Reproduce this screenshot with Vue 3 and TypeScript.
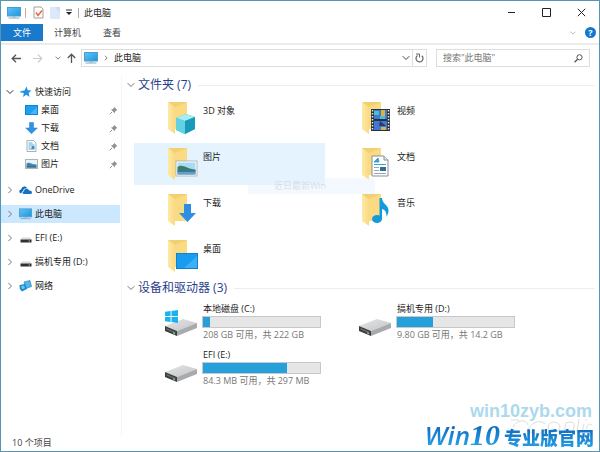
<script setup lang="ts">
import { ref } from 'vue'

interface NavItem { name: string; icon: string }
interface Drive { name: string; free: string; used: number; system?: boolean }

const quick: NavItem[] = [
  { name: '桌面', icon: 'desktop' },
  { name: '下载', icon: 'download' },
  { name: '文档', icon: 'document' },
  { name: '图片', icon: 'picture' },
]
const roots: NavItem[] = [
  { name: 'OneDrive', icon: 'cloud' },
  { name: '此电脑', icon: 'pc' },
  { name: 'EFI (E:)', icon: 'disk' },
  { name: '搞机专用 (D:)', icon: 'disk' },
  { name: '网络', icon: 'network' },
]
const folders: NavItem[] = [
  { name: '3D 对象', icon: 'cube' },
  { name: '视频', icon: 'video' },
  { name: '图片', icon: 'picture' },
  { name: '文档', icon: 'document' },
  { name: '下载', icon: 'download' },
  { name: '音乐', icon: 'music' },
  { name: '桌面', icon: 'desktop' },
]
const drives: Drive[] = [
  { name: '本地磁盘 (C:)', free: '208 GB 可用，共 222 GB', used: 6, system: true },
  { name: '搞机专用 (D:)', free: '9.80 GB 可用，共 14.2 GB', used: 31 },
  { name: 'EFI (E:)', free: '84.3 MB 可用，共 297 MB', used: 72 },
]
const current = ref('此电脑')
const hovered = ref(2)
const query = ref('')
</script>

<template>
  <div class="window">
    <svg class="defs" aria-hidden="true">
      <defs>
        <linearGradient id="gBlue" x1="0" y1="0" x2="1" y2="1">
          <stop offset="0" stop-color="#62c5f5" /><stop offset="1" stop-color="#1d93e0" />
        </linearGradient>
        <linearGradient id="gFolder" x1="0" y1="0" x2="1" y2="0">
          <stop offset="0" stop-color="#ffe9a6" /><stop offset="1" stop-color="#f9da84" />
        </linearGradient>
        <linearGradient id="gDisk" x1="0" y1="0" x2="1" y2="1">
          <stop offset="0" stop-color="#e6e6e8" /><stop offset="1" stop-color="#c3c4c7" />
        </linearGradient>
        <symbol id="pc" viewBox="0 0 14 12">
          <rect x="0.5" y="0.5" width="13" height="8.5" fill="url(#gBlue)" stroke="#4a9fd0" />
          <path d="M5 9.5h4v1H5z" fill="#9cb9ca" /><path d="M1.5 11h11" stroke="#86a9bd" />
        </symbol>
        <symbol id="n-desktop" viewBox="0 0 13 12">
          <rect x="0.5" y="1.5" width="12" height="9" fill="#1ba0f2" stroke="#1583cf" /><path d="M5 10L12 3v7z" fill="#47b6f8" />
        </symbol>
        <symbol id="n-download" viewBox="0 0 13 12">
          <path d="M4.5 0.5h4V6h3.8L6.5 11.8 0.7 6h3.8z" fill="#3293e0" stroke="#2379c4" stroke-width="0.5" />
        </symbol>
        <symbol id="n-document" viewBox="0 0 13 12">
          <path d="M2 .5h6.500L11 3v8.500H2z" fill="#fff" stroke="#8ca0ae" stroke-width="0.8" />
          <path d="M3.500 3h4M3.500 5h6M3.500 7h2M3.500 9h6" stroke="#55a7d2" /><path d="M6.500 6h3v3h-3z" fill="#3a8fc2" />
        </symbol>
        <symbol id="n-picture" viewBox="0 0 13 12">
          <rect x="0.5" y="1.500" width="12" height="9" fill="#e6f3fb" stroke="#a9b4bc" />
          <path d="M1.500 5.500c3-2 4 1 10 1v3h-10z" fill="#3c86ad" /><path d="M1.500 8.500h10v1h-10z" fill="#2c5a73" />
        </symbol>
        <symbol id="n-cloud" viewBox="0 0 13 12">
          <path d="M2.500 9.500C-.5 9-.2 5.600 2.300 5.500 2.600 2 7 1.300 8.200 4.300 5 4 4 6 4.200 7c-1.500.3-1.900 1.500-1.700 2.500z" fill="#0a66b8" />
          <path d="M5 10C2.900 9.500 3.100 7.300 5 7.200 5.200 4.200 9.300 4 10 6.500c3.500-.3 3.700 3.200 1.500 3.500z" fill="#1271c8" />
        </symbol>
        <symbol id="n-disk" viewBox="0 0 13 12">
          <path d="M3 5.500h8l1.500 2h-11z" fill="#d9dadd" /><rect x="1.500" y="7.500" width="11" height="3" fill="#2f3133" />
          <path d="M9.500 9h1.500" stroke="#85c78c" />
        </symbol>
        <symbol id="n-network" viewBox="0 0 13 12">
          <path d="M5 2l6-1.500 1.500 6L7 8.500z" fill="#4db8ec" stroke="#1a78b8" stroke-width=".6" />
          <path d="M.5 5L6 4l2 5-5 2.500L.8 9z" fill="#1f86cb" /><path d="M2 6l3-.6 1 2.800-3 1z" fill="#65c7f4" />
        </symbol>
        <symbol id="folder" viewBox="0 0 34 34">
          <path d="M1 1h19v27H8z" fill="#f2cf70" />
          <path d="M8 6l12-5v27H8z" fill="#fada83" />
          <path d="M1 1l7 5v27l-7-5z" fill="url(#gFolder)" />
        </symbol>
        <symbol id="f-cube" viewBox="0 0 34 34">
          <path d="M9 17l10-4 9 3v12l-10 5-9-4z" fill="#2fb5cf" /><path d="M9 17l10-4 9 3-10 4z" fill="#a7edf3" />
          <path d="M9 17l9 3v13l-9-4z" fill="#62d2e3" /><path d="M18 20l10-4v12l-10 5z" fill="#189bb9" />
        </symbol>
        <symbol id="f-picture" viewBox="0 0 34 34">
          <rect x="9" y="14" width="21" height="15" fill="#fff" stroke="#a5abb0" stroke-width=".8" /><path d="M10.500 15.500h18v12h-18z" fill="#a9dbf6" />
          <path d="M10.500 20c5-4 9 2 18 2.500v2h-18z" fill="#3a7f61" /><path d="M10.500 23.500h18v4h-18z" fill="#3479ad" /><path d="M10.500 26h18" stroke="#9bc5dc" />
        </symbol>
        <symbol id="f-video" viewBox="0 0 34 34">
          <rect x="10" y="8" width="19" height="22" fill="#27313c" /><path d="M13 9h13v9H13zM13 20h13v9H13z" fill="#4278d4" />
          <path d="M13 10h5v4h-5zM19 15h5v3h-5z" fill="#45c2cd" /><path d="M20 9h4v6h-4zM20 26h5v3h-5z" fill="#dbb43c" />
          <path d="M19 20l6 5h-7z" fill="#223d78" />
          <path d="M11.500 9v20M27.500 9v20" stroke="#e6e8ea" stroke-width="1.500" stroke-dasharray="1.500 1.500" />
        </symbol>
        <symbol id="f-document" viewBox="0 0 34 34">
          <path d="M11 9h12l4 4v16H11z" fill="#fff" stroke="#8b8f94" /><path d="M23 9v4h4" fill="#e5eaee" stroke="#8b8f94" />
          <path d="M13 15l4-4 1 4zM13 17.500h12" stroke="#39a2d8" fill="#39a2d8" />
          <path d="M13 20.500h5M13 23.500h5M13 26.500h12" stroke="#94a9b8" /><path d="M19 20h6v4h-6z" fill="#386c91" />
        </symbol>
        <symbol id="f-download" viewBox="0 0 34 34">
          <path d="M17 11h7v9h5l-8.500 9L12 20h5z" fill="#2e8fe0" />
        </symbol>
        <symbol id="f-music" viewBox="0 0 34 34">
          <ellipse cx="16" cy="26" rx="5" ry="4" fill="#129bdc" />
          <path d="M18.500 5h2.500c0 6 7 7 6.500 13-.2 3-1.500 4-2 6 0-5-1-7-4.500-8v10h-2.500z" fill="#129bdc" />
        </symbol>
        <symbol id="f-desktop" viewBox="0 0 34 34">
          <rect x="9.500" y="14.500" width="21" height="15" fill="#189cf0" stroke="#1181cd" /><path d="M17 29L30 17v12z" fill="#3bb0f7" />
        </symbol>
        <symbol id="drive" viewBox="0 0 34 32">
          <path d="M1 20L19 13l14 4-20 8z" fill="url(#gDisk)" /><path d="M13 25l20-8v5l-20 8z" fill="#a9aaae" />
          <path d="M1 20l12 5v5L1 25z" fill="#3a3c3e" /><path d="M2.500 22l9 4v1.500l-9-4z" fill="#6a6d6f" />
          <path d="M9 26l2 1v1.500l-2-1z" fill="#72c47f" />
        </symbol>
        <symbol id="winlogo" viewBox="0 0 14 14">
          <path d="M0 2l6-1v5.500H0zM7 1l7-1v6.500H7zM0 7.500h6V13l-6-1zM7 7.500h7V14l-7-1z" fill="#18b4ee" />
        </symbol>
        <symbol id="right" viewBox="0 0 8 8"><path d="M2.500 1l3 3-3 3" fill="none" stroke="currentColor" /></symbol>
        <symbol id="down" viewBox="0 0 8 8"><path d="M0.700 2.200L4 5.500l3.300-3.300" fill="none" stroke="currentColor" /></symbol>
      </defs>
    </svg>

    <header class="titlebar">
      <svg class="pc"><use href="#pc" /></svg>
      <i class="sep warm"></i>
      <button class="plain" aria-label="属性">
        <svg width="11" height="13" viewBox="0 0 11 13"><path d="M1 1h7l2 2v9H1z" fill="#fff" stroke="#a99b98" /><path d="M3 6.500l2 3 4-5" fill="none" stroke="#e0683c" stroke-width="1.500" /></svg>
      </button>
      <button class="plain" aria-label="新建文件夹">
        <svg width="10" height="12" viewBox="0 0 10 12"><path d="M0 0h10v12H0z" fill="#dce9fa" /><path d="M5 0h5v6z" fill="#ccddf5" /></svg>
      </button>
      <button class="plain" aria-label="自定义">
        <svg width="6" height="7" viewBox="0 0 6 7"><path d="M0 1h6" stroke="#333" /><path d="M0 3h6L3 6z" fill="#222" /></svg>
      </button>
      <i class="sep"></i>
      <h1>此电脑</h1>
      <div class="controls">
        <button class="plain" aria-label="最小化"><svg viewBox="0 0 9 9"><path d="M1 4.500h7" stroke="#222" /></svg></button>
        <button class="plain" aria-label="最大化"><svg viewBox="0 0 9 9"><path d="M.5.5h8v8h-8z" fill="none" stroke="#222" /></svg></button>
        <button class="plain" aria-label="关闭"><svg viewBox="0 0 9 9"><path d="M.8.8l7.400 7.400M8.200.8L.8 8.200" stroke="#222" /></svg></button>
      </div>
    </header>

    <nav class="ribbon">
      <button class="tab active">文件</button>
      <button class="tab">计算机</button>
      <button class="tab">查看</button>
      <div class="help">
        <button class="plain light" aria-label="展开功能区"><svg class="small"><use href="#down" /></svg></button>
        <button class="plain question" aria-label="帮助">?</button>
      </div>
    </nav>

    <div class="address">
      <button class="plain" aria-label="后退"><svg width="10" height="9" viewBox="0 0 10 9"><path d="M5 .8L1.200 4.500 5 8.200M1 4.500h9" fill="none" stroke="#555" stroke-width="1.300" /></svg></button>
      <button class="plain" aria-label="前进"><svg width="10" height="9" viewBox="0 0 10 9"><path d="M5 .8l3.800 3.700L5 8.200M9 4.500H0" fill="none" stroke="#ccc" stroke-width="1.200" /></svg></button>
      <button class="plain grey" aria-label="最近位置"><svg class="small"><use href="#down" /></svg></button>
      <button class="plain" aria-label="上移"><svg width="9" height="10" viewBox="0 0 9 10"><path d="M.8 5l3.700-3.800L8.200 5M4.500 1v9" fill="none" stroke="#555" stroke-width="1.300" /></svg></button>
      <div class="path">
        <svg class="pc"><use href="#pc" /></svg>
        <svg class="small"><use href="#right" /></svg>
        <span>此电脑</span>
        <button class="plain drop" aria-label="地址列表"><svg class="chev"><use href="#down" /></svg></button>
        <button class="plain refresh" aria-label="刷新"><svg width="9" height="10" viewBox="0 0 9 10"><path d="M2.500 2.500a3.500 3.500 0 1 0 4.300.2" fill="none" stroke="#666" stroke-width="1.200" /><path d="M1 1h3.500v3.500" fill="none" stroke="#666" /></svg></button>
      </div>
      <label class="search">
        <input v-model="query" type="text" placeholder="搜索&quot;此电脑&quot;" aria-label="搜索此电脑" />
        <svg width="9" height="9" viewBox="0 0 9 9"><circle cx="5.500" cy="3.300" r="2.600" fill="none" stroke="#555" /><path d="M3.600 5.200L.6 8.300" stroke="#555" stroke-width="1.300" /></svg>
      </label>
    </div>

    <div class="body">
      <aside class="tree">
        <div class="quick">
          <a href="#quick" class="row">
            <svg class="chev dark"><use href="#down" /></svg>
            <svg class="star" viewBox="0 0 12 12"><path d="M6.500.5l1.300 3.700 3.700.3-2.900 2.500.9 4-3.200-2.200L3 11l.9-4L0 6.200l.5-1 4-.8z" fill="#2490e2" /></svg>
            <span>快速访问</span>
          </a>
          <a v-for="q in quick" :key="q.name" href="#quick" class="row child">
            <svg class="nav"><use :href="'#n-' + q.icon" /></svg>
            <span>{{ q.name }}</span>
            <svg class="pin" viewBox="0 0 9 9"><path d="M5 .7l3.300 3.300-1 .5-1.500 1.500v1.500L2 3.500l1.500-.3L5 1.700z" fill="#8b9298" /><path d="M3 6L.8 8.200" stroke="#8b9298" /></svg>
          </a>
        </div>
        <a v-for="r in roots" :key="r.name" href="#root" class="row root" :class="{ selected: r.name === current }" @click.prevent="current = r.name">
          <svg class="chev"><use href="#right" /></svg>
          <svg v-if="r.icon === 'pc'" class="nav"><use href="#pc" /></svg>
          <svg v-else class="nav"><use :href="'#n-' + r.icon" /></svg>
          <span>{{ r.name }}</span>
        </a>
      </aside>

      <main>
        <section>
          <h2><svg class="chev"><use href="#down" /></svg>文件夹 (7)</h2>
          <div class="grid">
            <a v-for="(f, i) in folders" :key="f.name" href="#folder" class="tile" :class="{ hover: i === hovered }" @mouseenter="hovered = i">
              <svg class="big" viewBox="0 0 34 34"><use href="#folder" width="34" height="34" /><use :href="'#f-' + f.icon" width="34" height="34" /></svg>
              <span>{{ f.name }}</span>
            </a>
          </div>
        </section>
        <section class="devices">
          <h2><svg class="chev"><use href="#down" /></svg>设备和驱动器 (3)</h2>
          <div class="grid">
            <a v-for="d in drives" :key="d.name" href="#drive" class="tile drive">
              <svg class="disk" viewBox="0 0 34 32"><use href="#drive" width="34" height="32" /><use v-if="d.system" href="#winlogo" x="1" y="4" width="13" height="13" /></svg>
              <div class="info">
                <span>{{ d.name }}</span>
                <div class="bar"><div class="fill" :style="{ width: d.used + '%' }"></div></div>
                <span class="free">{{ d.free }}</span>
              </div>
            </a>
          </div>
        </section>
        <div class="ghost">近日最新Win</div>
      </main>
    </div>

    <footer>10 个项目</footer>

    <div class="brand">
      <div class="site">win10zyb.com</div>
      <svg class="faint" viewBox="0 0 84 20" aria-hidden="true">
        <path d="M1 3h8M3 10c4-8 14-8 15-2M17 15c3-10 13-13 18-8M19 14c5 5 12 4 16-1" />
        <ellipse cx="44" cy="10" rx="6" ry="5" /><path d="M54 15l2-9c5-2 9-1 8 3l-1 6M69 2l-2 13M72 15l2-8M75 3h2M82 8c-4-2-6 1-5 4" />
      </svg>
      <div class="name"><span class="win">Win</span><span class="ten">10</span><span class="cn">专业版官网</span></div>
    </div>
  </div>
</template>

<style>
body { margin: 0; }
</style>

<style scoped>
.window {
  position: relative;
  box-sizing: border-box;
  min-height: 100vh;
  display: flex;
  flex-direction: column;
  border: 1px solid #5596b4;
  background: #fff;
  color: #222;
  font: 9px/12px "Open Sans", "Noto Sans CJK SC", sans-serif;
}
.defs { position: absolute; width: 0; height: 0; }
svg { display: block; flex: none; }
.plain { display: flex; align-items: center; justify-content: center; padding: 0; border: 0; background: none; color: #555; }
.plain.light .small { color: #aaa; }
.plain.grey { color: #999; }
a { color: inherit; text-decoration: none; }
.pc { width: 14px; height: 12px; }
.chev { width: 8px; height: 8px; color: #777; }
.small { width: 6px; height: 6px; color: #555; }

.titlebar { display: flex; align-items: center; height: 23px; padding-left: 6px; gap: 6px; }
.sep { width: 1px; height: 10px; background: #aaa; }
.sep.warm { background: #d9a790; margin: 0 1px 0 -2px; }
h1 { margin: 0 0 0 -1px; font-size: 9px; font-weight: 400; }
.controls { display: flex; margin-left: auto; gap: 26px; padding-right: 13px; }
.controls svg { width: 9px; height: 9px; }

.ribbon { display: flex; height: 17px; padding-bottom: 2px; border-bottom: 2px solid #ececec; }
.tab { padding: 0 11px; border: 0; background: none; color: #444; font: inherit; }
.tab.active { padding: 0 12px; background: #1979ca; color: #fff; }
.help { display: flex; align-items: center; gap: 9px; margin-left: auto; padding-right: 3px; }
.question { width: 11px; height: 11px; border-radius: 50%; background: #1278cf; color: #fff; font: bold 9px/11px "Open Sans", sans-serif; }

.address { display: flex; align-items: center; padding: 4px 9px 8px 10px; }
.address > .plain { margin-right: 12px; }
.address > .plain:nth-child(3) { margin: 0 6px 0 0; }
.address > .plain:nth-child(4) { margin-right: 5px; }
.path, .search { display: flex; align-items: center; box-sizing: border-box; height: 18px; border: 1px solid #ddd; }
.path { flex: 1; padding-left: 2px; gap: 5px; }
.drop { margin-left: auto; }
.path .chev { color: #444; }
.refresh { width: 14px; height: 16px; margin-left: -3px; border-left: 1px solid #ddd; }
.search { width: 154px; margin-left: 9px; padding: 0 6px; }
input { flex: 1; min-width: 0; padding: 0; border: 0; outline: 0; background: none; color: #666; font: inherit; }
input::placeholder { color: #777; opacity: 1; }

.body { flex: 1; display: flex; }
.tree { flex: none; width: 120px; padding-top: 8px; border-right: 1px solid #f5f5f5; }
.quick { margin-bottom: 8px; }
.row { display: flex; align-items: center; height: 18px; margin-right: 1px; padding-left: 5px; }
.row .dark { color: #333; }
.row .chev { margin-right: 6px; }
.star { width: 12px; height: 12px; margin-right: 3px; }
.nav { width: 13px; height: 12px; margin-right: 3px; }
.root { margin-bottom: 6px; }
.root .chev { margin-right: 5px; }
.child { padding-left: 24px; }
.pin { width: 9px; height: 9px; margin: 0 2px 0 auto; }
.selected { background: #cce8ff; }

main { position: relative; flex: 1; min-width: 0; padding: 2px 4px 0 5px; }
h2 { display: flex; align-items: center; gap: 3px; height: 16px; margin: 0 0 4px; color: #2b3f8c; font-size: 12px; font-weight: 400; }
h2::after { content: ""; flex: 1; height: 1px; margin-left: 4px; background: #eee; }
.grid { display: grid; grid-template-columns: repeat(auto-fill, 191px); gap: 4px 3px; padding-left: 7px; }
.devices { padding-top: 3px; }
.devices h2 { margin-bottom: 2px; }
.tile { display: flex; align-items: flex-start; height: 42px; padding-left: 33px; box-sizing: border-box; }
.tile.hover { background: #e5f3ff; }
.tile > span { margin-top: 8px; }
.big { width: 34px; height: 34px; margin: 4px 2px 0 0; }
.drive { padding-left: 30px; }
.disk { width: 34px; height: 32px; margin: 8px 4px 0 0; }
.info { flex: 1; padding: 5px 4px 0 0; }
.info span { display: block; padding-left: 1px; }
.info .bar { box-sizing: border-box; height: 12px; margin: 1px 0; border: 1px solid #c8c8c8; background: #e6e6e6; }
.fill { height: 100%; background: #26a0da; }
.info .free { color: #777; }
.ghost { position: absolute; left: 126px; top: 103px; width: 101px; padding-left: 26px; background: #e8f4ff80; color: #b5b5bd66; line-height: 16px; }

footer { padding: 0 11px 1px; color: #444; line-height: 14px; }

.brand { position: absolute; right: 5px; bottom: 0; text-align: right; }
.site { padding-right: 2px; color: #acd9ee; font: bold 18px/20px "Liberation Sans", sans-serif; }
.faint { position: absolute; right: 0; top: 16px; width: 84px; height: 20px; fill: none; stroke: #dfdcdc; stroke-width: 1; }
.name { position: relative; display: flex; align-items: baseline; justify-content: flex-end; line-height: 28px; }
.name span { background: linear-gradient(#0b5cb4, #27a9ee); background-clip: text; color: transparent; }
.name .win { background: radial-gradient(circle at 33px 6px, #f5a623 3px, transparent 4px), linear-gradient(#0b5cb4, #27a9ee); background-clip: text; font: italic 600 26px/28px "Open Sans", sans-serif; }
.ten { padding-right: 4px; font: italic bold 30px/28px "Liberation Serif", serif; }
.cn { font: 900 18px/28px "Noto Sans CJK SC", sans-serif; }
</style>
